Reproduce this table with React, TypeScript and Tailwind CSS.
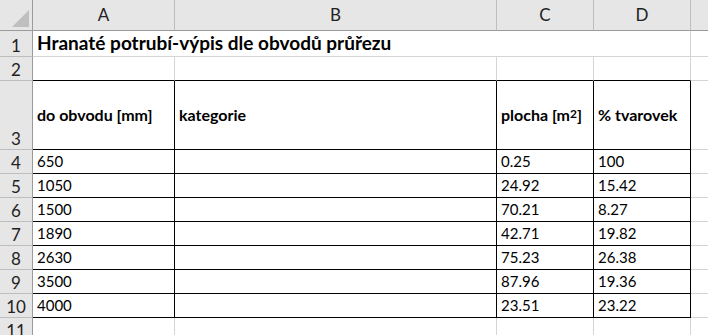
import React from 'react';

// sheet geometry taken from the screenshot
const colWidths = 'grid-cols-[33px_142px_322px_97px_97px_1fr]';
const rowHeights = 'grid-rows-[31px_26px_24px_69px_24px_24px_24px_24px_24px_24px_24px_24px]';

const letters = ['A', 'B', 'C', 'D'];

const data: [string, string, string, string][] = [
  ['650', '', '0.25', '100'],
  ['1050', '', '24.92', '15.42'],
  ['1500', '', '70.21', '8.27'],
  ['1890', '', '42.71', '19.82'],
  ['2630', '', '75.23', '26.38'],
  ['3500', '', '87.96', '19.36'],
  ['4000', '', '23.51', '23.22'],
];

const RowHead = ({ n }: { n: number }) => (
  <div className="bg-[#e6e6e6] border-r border-r-[#9b9b9b] border-b border-b-[#bdbdbd] flex items-end justify-center text-[17px] leading-none text-[#222]">
    <span className="pb-[2px]">{n}</span>
  </div>
);

const Cell = ({
  children,
  table = false,
  topOfTable = false,
  bold = false,
  center = false,
}: {
  children?: React.ReactNode;
  table?: boolean;
  topOfTable?: boolean;
  bold?: boolean;
  center?: boolean;
}) => (
  <div
    className={
      'border-r border-b px-[4px] flex leading-none whitespace-nowrap overflow-visible ' +
      (table ? 'border-r-black border-b-black ' : 'border-r-[#d4d4d4] ' + (topOfTable ? 'border-b-black ' : 'border-b-[#d4d4d4] ')) +
      (center ? 'items-center ' : 'items-end pb-[4px] ') +
      (bold ? 'font-bold text-[16px] ' : 'text-[15px] ')
    }
  >
    {children}
  </div>
);

export default function App() {
  return (
    <div className="w-[708px] h-[335px] overflow-hidden bg-white text-black" style={{ fontFamily: 'Lato, "Open Sans", sans-serif' }}>
      <div className={`grid ${colWidths} ${rowHeights}`}>
        {/* corner */}
        <div className="bg-[#e6e6e6] border-r border-r-[#9b9b9b] border-b border-b-[#9b9b9b] flex items-end justify-end p-[3px]">
          <div className="w-0 h-0 border-l-[17px] border-l-transparent border-b-[17px] border-b-[#bfbfbf]" />
        </div>
        {letters.map((l) => (
          <div key={l} className="bg-[#e6e6e6] border-r border-r-[#bdbdbd] border-b border-b-[#9b9b9b] flex items-center justify-center text-[17px] text-[#222]">
            {l}
          </div>
        ))}
        <div className="bg-[#e6e6e6] border-b border-b-[#9b9b9b]" />

        {/* row 1 */}
        <RowHead n={1} />
        <div className="col-span-4 border-r border-r-[#d4d4d4] border-b border-b-[#d4d4d4] flex items-end pb-[4px] px-[4px] text-[19px] font-bold leading-none whitespace-nowrap">
          Hranaté potrubí-výpis dle obvodů průřezu
        </div>
        <div className="border-b border-b-[#d4d4d4]" />

        {/* row 2 */}
        <RowHead n={2} />
        <Cell topOfTable />
        <Cell topOfTable />
        <Cell topOfTable />
        <Cell topOfTable />
        <div className="border-b border-b-[#d4d4d4]" />

        {/* row 3 header */}
        <RowHead n={3} />
        <Cell table bold center>do obvodu [mm]</Cell>
        <Cell table bold center>kategorie</Cell>
        <Cell table bold center>
          plocha [m<sup className="text-[12px] relative -top-[1px]">2</sup>]
        </Cell>
        <Cell table bold center>% tvarovek</Cell>
        <div className="border-b border-b-[#d4d4d4]" />

        {data.map((r, i) => (
          <React.Fragment key={i}>
            <RowHead n={i + 4} />
            {r.map((v, j) => (
              <Cell key={j} table>{v}</Cell>
            ))}
            <div className="border-b border-b-[#d4d4d4]" />
          </React.Fragment>
        ))}

        {/* row 11, cut by the window edge */}
        <RowHead n={11} />
        <Cell />
        <Cell />
        <Cell />
        <Cell />
        <div />
      </div>
    </div>
  );
}
